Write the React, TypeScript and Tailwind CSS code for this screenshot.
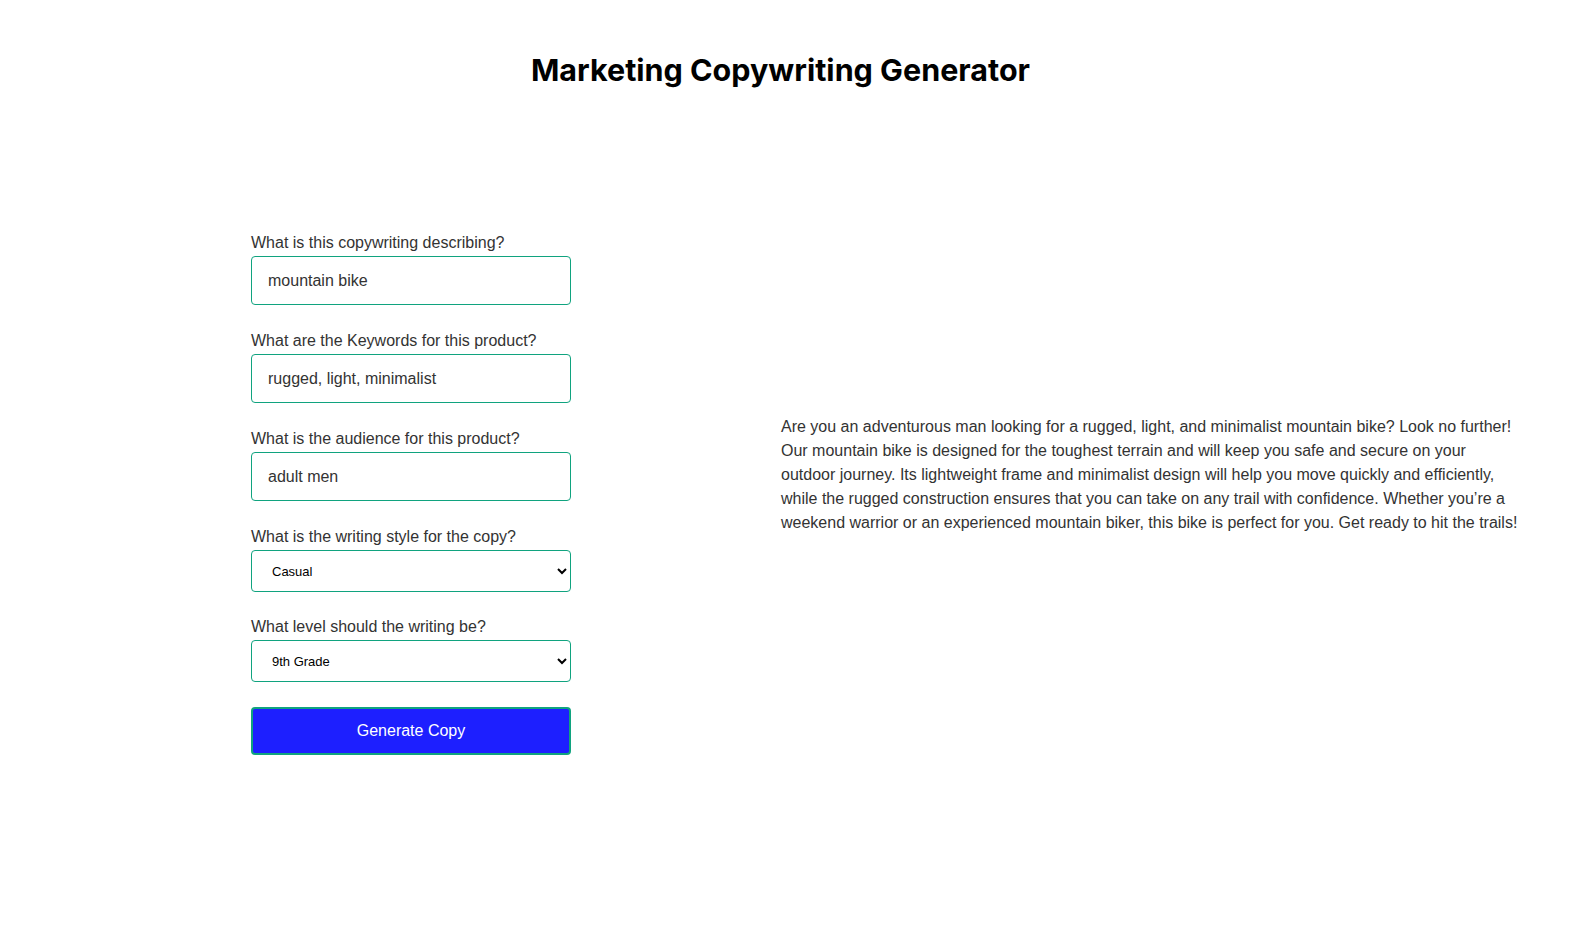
import { useState } from "react";

const FIELDS = [
  { label: "What is this copywriting describing?", value: "mountain bike" },
  { label: "What are the Keywords for this product?", value: "rugged, light, minimalist" },
  { label: "What is the audience for this product?", value: "adult men" },
];

const STYLES = ["Casual", "Formal", "Persuasive", "Humorous"];
const LEVELS = ["5th Grade", "9th Grade", "College", "Professional"];

const COPY =
  "Are you an adventurous man looking for a rugged, light, and minimalist mountain bike? Look no further! Our mountain bike is designed for the toughest terrain and will keep you safe and secure on your outdoor journey. Its lightweight frame and minimalist design will help you move quickly and efficiently, while the rugged construction ensures that you can take on any trail with confidence. Whether you\u2019re a weekend warrior or an experienced mountain biker, this bike is perfect for you. Get ready to hit the trails!";

export default function App() {
  const [values, setValues] = useState(FIELDS.map((f) => f.value));
  const [style, setStyle] = useState("Casual");
  const [level, setLevel] = useState("9th Grade");

  return (
    <div className="min-h-screen bg-white pr-[15px] font-['Liberation_Sans',Arial,sans-serif] text-[#333]">
      <h1 className="pt-[52px] text-center font-['Inter',sans-serif] text-[30.5px] leading-[36px] font-bold text-black">
        Marketing Copywriting Generator
      </h1>

      <div className="flex items-start pt-[145px]">
        <form className="ml-[251px] flex w-[320px] flex-col" onSubmit={(e) => e.preventDefault()}>
          {FIELDS.map((f, i) => (
            <div key={f.label} className="mb-[26px] flex flex-col">
              <label className="mb-[3px] text-[16px] leading-[20px]">{f.label}</label>
              <input
                type="text"
                value={values[i]}
                onChange={(e) => setValues(values.map((v, j) => (j === i ? e.target.value : v)))}
                className="h-[49px] rounded-[4px] border border-[#10a37f] px-4 text-[16px] text-[#333] outline-none"
              />
            </div>
          ))}

          <div className="mb-[25px] flex flex-col">
            <label className="mb-[3px] text-[16px] leading-[20px]">What is the writing style for the copy?</label>
            <select
              value={style}
              onChange={(e) => setStyle(e.target.value)}
              className="h-[42px] rounded-[4px] border border-[#10a37f] bg-white px-4 text-[13px] text-black outline-none"
            >
              {STYLES.map((s) => (
                <option key={s}>{s}</option>
              ))}
            </select>
          </div>

          <div className="mb-[25px] flex flex-col">
            <label className="mb-[3px] text-[16px] leading-[20px]">What level should the writing be?</label>
            <select
              value={level}
              onChange={(e) => setLevel(e.target.value)}
              className="h-[42px] rounded-[4px] border border-[#10a37f] bg-white px-4 text-[13px] text-black outline-none"
            >
              {LEVELS.map((l) => (
                <option key={l}>{l}</option>
              ))}
            </select>
          </div>

          <button
            type="submit"
            className="h-[48px] rounded-[4px] border-2 border-[#10a37f] bg-[#1d1fff] text-[16px] text-white"
          >
            Generate Copy
          </button>
        </form>

        <p className="ml-[210px] mt-[182px] w-[742px] text-[16px] leading-[24px] text-[#333]">{COPY}</p>
      </div>
    </div>
  );
}
